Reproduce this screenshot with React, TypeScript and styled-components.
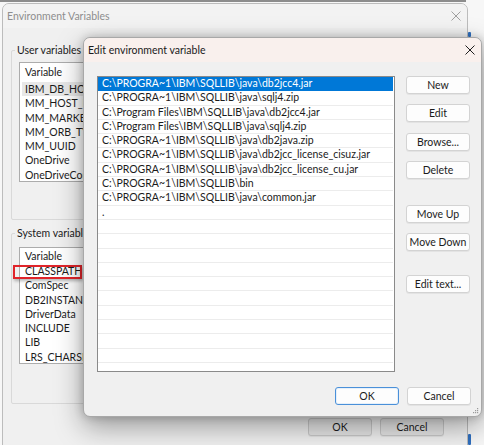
import React from "react";
import styled, { createGlobalStyle } from "styled-components";

const GlobalStyle = createGlobalStyle`
  html, body { margin: 0; padding: 0; }
  body {
    width: 484px;
    height: 445px;
    overflow: hidden;
    background: #f6f6f6;
    font-family: Lato, "Liberation Sans", sans-serif;
    color: #1b1b1b;
  }
`;

const Desktop = styled.div`
  position: relative;
  width: 484px;
  height: 445px;
  overflow: hidden;
  background: #f7f7f7;
  display: flex;
  flex-direction: column;
  align-items: flex-start;
`;

/* bottom edge of a window further back */
const BackEdge = styled.div`
  flex: none;
  width: 466px;
  height: 2px;
  background: #8d8d8d;
`;

const BackAccent = styled.span<{ $top: number; $h: number }>`
  position: absolute;
  left: 468px;
  top: ${(p) => p.$top}px;
  width: 3px;
  height: ${(p) => p.$h}px;
  background: #2f6fbf;
  border-radius: 1px;
`;

const MainWindow = styled.div`
  flex: none;
  margin: 1px 0 0 2px;
  width: 466px;
  height: 446px;
  box-sizing: border-box;
  border: 1px solid #bcbcbc;
  border-radius: 7px 7px 0 0;
  background: #f0f0f0;
  display: flex;
  flex-direction: column;
`;

const TitleBar = styled.div<{ $active?: boolean }>`
  flex: none;
  height: 24px;
  display: flex;
  align-items: center;
  justify-content: space-between;
  padding: 0 6px 0 4px;
  background: ${(p) => (p.$active ? "#f9f0ed" : "#f3f3f3")};
  border-radius: 6px 6px 0 0;
  font-size: 10.5px;
  color: ${(p) => (p.$active ? "#1b1b1b" : "#8e8e8e")};
`;

const CloseGlyph = ({ color }: { color: string }) => (
  <svg width="10" height="10" viewBox="0 0 10 10">
    <path d="M0.5 0.5 L9.5 9.5 M9.5 0.5 L0.5 9.5" stroke={color} strokeWidth="1" fill="none" />
  </svg>
);

const MainBody = styled.div`
  flex: 1;
  display: flex;
  flex-direction: column;
  padding: 0 8px;
`;

const GroupBox = styled.div<{ $top: number; $h: number }>`
  flex: none;
  margin-top: ${(p) => p.$top}px;
  height: ${(p) => p.$h}px;
  box-sizing: border-box;
  border: 1px solid #d9d9d9;
  border-radius: 2px;
`;

const GroupLabel = styled.div`
  width: fit-content;
  height: 14px;
  margin: -8px 0 0 3px;
  padding: 0 2px;
  line-height: 14px;
  background: #f0f0f0;
  font-size: 10.5px;
  white-space: nowrap;
`;

const VarList = styled.div<{ $top: number; $h: number }>`
  margin: ${(p) => p.$top}px 0 0 7px;
  width: 430px;
  height: ${(p) => p.$h}px;
  box-sizing: border-box;
  border: 1px solid #acacac;
  background: #ffffff;
`;

const VarHeader = styled.div<{ $h: number }>`
  height: ${(p) => p.$h}px;
  line-height: ${(p) => p.$h}px;
  padding-left: 5px;
  font-size: 10.5px;
`;

const VarRow = styled.div<{ $selected?: boolean }>`
  position: relative;
  height: 14.3px;
  line-height: 14px;
  margin-left: 2px;
  padding-left: 3px;
  font-size: 10.5px;
  white-space: nowrap;
  background: ${(p) => (p.$selected ? "#e8e8e8" : "transparent")};
`;

/* red callout drawn around one variable name */
const Callout = styled.span`
  position: absolute;
  left: -9px;
  top: 1px;
  width: 69px;
  height: 14px;
  border: 2px solid #e0242a;
  box-sizing: border-box;
  box-shadow: 1px 2px 3px rgba(0, 0, 0, 0.28);
`;

const Footer = styled.div<{ $top: number; $right: number }>`
  flex: none;
  display: flex;
  justify-content: flex-end;
  gap: 8px;
  margin-top: ${(p) => p.$top}px;
  padding-right: ${(p) => p.$right}px;
`;

const Button = styled.button<{ $variant?: "default" | "muted"; $gap?: number }>`
  flex: none;
  width: 64px;
  height: 18px;
  margin-top: ${(p) => p.$gap ?? 0}px;
  padding: 0;
  box-sizing: border-box;
  border-radius: 3px;
  font-family: Lato, "Liberation Sans", sans-serif;
  font-size: 10.5px;
  color: #1b1b1b;
  border: 1px solid
    ${(p) => (p.$variant === "default" ? "#4a90d9" : p.$variant === "muted" ? "#c9c9c9" : "#d3d3d3")};
  background: ${(p) => (p.$variant === "muted" ? "#e6e6e6" : "#fdfdfd")};
  box-shadow: ${(p) => (p.$variant === "default" ? "inset 0 0 0 1px #e6f0fa" : "0 1px 0 rgba(0,0,0,0.05)")};
`;

const Dialog = styled.div`
  position: absolute;
  left: 83px;
  top: 37px;
  width: 399px;
  height: 380px;
  box-sizing: border-box;
  border: 1px solid #a8a8a8;
  border-radius: 7px;
  background: #f0f0f0;
  box-shadow: 0 10px 28px rgba(0, 0, 0, 0.36), 0 0 10px rgba(0, 0, 0, 0.2);
  display: flex;
  flex-direction: column;
  overflow: hidden;
`;

const DialogBody = styled.div`
  position: relative;
  flex: 1;
  display: flex;
  flex-direction: column;
  padding: 14px 10px 10px 13px;
`;

const DialogMain = styled.div`
  display: flex;
  align-items: flex-start;
  gap: 11px;
`;

const PathList = styled.div`
  width: 298px;
  height: 296px;
  box-sizing: border-box;
  border: 1px solid #8a8a8a;
  background: #ffffff;
  overflow: hidden;
`;

const PathRow = styled.div<{ $selected?: boolean }>`
  height: 14.3px;
  box-sizing: border-box;
  line-height: 13.5px;
  padding-left: 4px;
  margin-right: 1px;
  font-size: 10.5px;
  white-space: nowrap;
  color: ${(p) => (p.$selected ? "#ffffff" : "#1b1b1b")};
  background: ${(p) => (p.$selected ? "#0078d7" : "#ffffff")};
  border-bottom: 1px solid ${(p) => (p.$selected ? "#0078d7" : "#ececec")};
`;

const ButtonColumn = styled.div`
  display: flex;
  flex-direction: column;
  width: 64px;
`;

const Grip = styled.svg<{ $right: number; $bottom: number }>`
  position: absolute;
  right: ${(p) => p.$right}px;
  bottom: ${(p) => p.$bottom}px;
`;

const GripDots = ({ right, bottom }: { right: number; bottom: number }) => (
  <Grip $right={right} $bottom={bottom} width="6" height="6" viewBox="0 0 6 6">
    <g fill="#9a9a9a">
      <rect x="4" y="0" width="1.2" height="1.2" />
      <rect x="2" y="2" width="1.2" height="1.2" />
      <rect x="4" y="2" width="1.2" height="1.2" />
      <rect x="0" y="4" width="1.2" height="1.2" />
      <rect x="2" y="4" width="1.2" height="1.2" />
      <rect x="4" y="4" width="1.2" height="1.2" />
    </g>
  </Grip>
);

const userVars = ["IBM_DB_HOME", "MM_HOST_NAME", "MM_MARKER_PATH", "MM_ORB_TYPE", "MM_UUID", "OneDrive", "OneDriveCommercial"];
const systemVars = ["CLASSPATH", "ComSpec", "DB2INSTANCE", "DriverData", "INCLUDE", "LIB", "LRS_CHARSET"];

const paths = [
  "C:\\PROGRA~1\\IBM\\SQLLIB\\java\\db2jcc4.jar",
  "C:\\PROGRA~1\\IBM\\SQLLIB\\java\\sqlj4.zip",
  "C:\\Program Files\\IBM\\SQLLIB\\java\\db2jcc4.jar",
  "C:\\Program Files\\IBM\\SQLLIB\\java\\sqlj4.zip",
  "C:\\PROGRA~1\\IBM\\SQLLIB\\java\\db2java.zip",
  "C:\\PROGRA~1\\IBM\\SQLLIB\\java\\db2jcc_license_cisuz.jar",
  "C:\\PROGRA~1\\IBM\\SQLLIB\\java\\db2jcc_license_cu.jar",
  "C:\\PROGRA~1\\IBM\\SQLLIB\\bin",
  "C:\\PROGRA~1\\IBM\\SQLLIB\\java\\common.jar",
  ".",
];

const rows = [...paths, ...Array.from({ length: 11 }, () => "")];

const sideButtons: { label: string; gap: number }[] = [
  { label: "New", gap: 0 },
  { label: "Edit", gap: 10 },
  { label: "Browse...", gap: 11 },
  { label: "Delete", gap: 10 },
  { label: "Move Up", gap: 26 },
  { label: "Move Down", gap: 10 },
  { label: "Edit text...", gap: 24 },
];

export default function App() {
  return (
    <>
      <GlobalStyle />
      <Desktop>
        <BackEdge />
        <BackAccent $top={32} $h={5} />
        <BackAccent $top={434} $h={11} />
        <MainWindow>
          <TitleBar>
            <span>Environment Variables</span>
            <CloseGlyph color="#a0a0a0" />
          </TitleBar>
          <MainBody>
            <GroupBox $top={22} $h={170}>
              <GroupLabel>User variables for user</GroupLabel>
              <VarList $top={5} $h={120}>
                <VarHeader $h={19}>Variable</VarHeader>
                {userVars.map((v, i) => (
                  <VarRow key={v} $selected={i === 0}>
                    {v}
                  </VarRow>
                ))}
              </VarList>
            </GroupBox>
            <GroupBox $top={13} $h={171}>
              <GroupLabel>System variables</GroupLabel>
              <VarList $top={7} $h={117}>
                <VarHeader $h={16}>Variable</VarHeader>
                {systemVars.map((v, i) => (
                  <VarRow key={v}>
                    {v}
                    {i === 0 && <Callout />}
                  </VarRow>
                ))}
              </VarList>
            </GroupBox>
            <Footer $top={14} $right={15}>
              <Button $variant="muted">OK</Button>
              <Button $variant="muted">Cancel</Button>
            </Footer>
          </MainBody>
        </MainWindow>

        <Dialog>
          <TitleBar $active>
            <span>Edit environment variable</span>
            <CloseGlyph color="#1f1f1f" />
          </TitleBar>
          <DialogBody>
            <DialogMain>
              <PathList>
                {rows.map((p, i) => (
                  <PathRow key={i} $selected={i === 0}>
                    {p}
                  </PathRow>
                ))}
              </PathList>
              <ButtonColumn>
                {sideButtons.map((b) => (
                  <Button key={b.label} $gap={b.gap}>
                    {b.label}
                  </Button>
                ))}
              </ButtonColumn>
            </DialogMain>
            <Footer $top={15} $right={0}>
              <Button $variant="default">OK</Button>
              <Button>Cancel</Button>
            </Footer>
            <GripDots right={2} bottom={2} />
          </DialogBody>
        </Dialog>
      </Desktop>
    </>
  );
}
